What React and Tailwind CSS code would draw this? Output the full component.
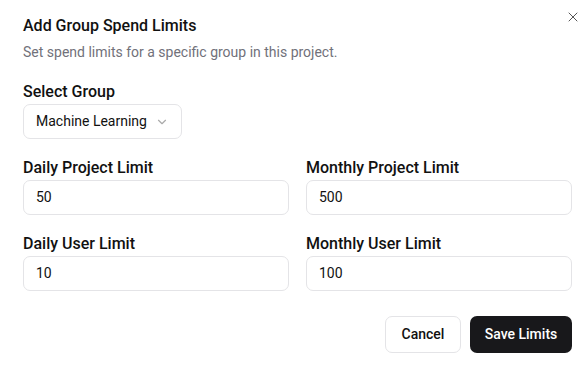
import { ChevronDown, X } from "lucide-react";

function Field({ label, value }) {
  return (
    <div className="flex flex-col">
      <label className="text-[16px] font-medium text-[#111] leading-[20px]">{label}</label>
      <div className="mt-[2px] h-[35px] rounded-[7px] border border-[#e4e4e7] px-[12px] flex items-center text-[14px] text-[#111]">
        {value}
      </div>
    </div>
  );
}

export default function App() {
  return (
    <div
      className="relative w-[588px] h-[367px] bg-white pl-[23px] pr-[16px] pt-[12px] overflow-hidden"
      style={{ fontFamily: 'Roboto, "Noto Sans", sans-serif' }}
    >
      <button className="absolute right-[7px] top-[9px] text-[#555]">
        <X size={16} strokeWidth={1.5} />
      </button>

      <h2 className="text-[16px] font-medium leading-[28px] text-[#111]">Add Group Spend Limits</h2>
      <p className="text-[14px] leading-[20px] text-[#71717a] mt-[2px]">
        Set spend limits for a specific group in this project.
      </p>

      <div className="mt-[18px]">
        <label className="text-[16px] font-medium text-[#111] leading-[20px]">Select Group</label>
        <div className="mt-[0px] w-[159px] h-[35px] rounded-[7px] border border-[#e4e4e7] px-[12px] flex items-center justify-between text-[14px] text-[#111]">
          <span>Machine Learning</span>
          <ChevronDown size={14} className="text-[#aaa]" />
        </div>
      </div>

      <div className="mt-[19px] grid grid-cols-2 gap-x-[17px] gap-y-[19px]">
        <Field label="Daily Project Limit" value="50" />
        <Field label="Monthly Project Limit" value="500" />
        <Field label="Daily User Limit" value="10" />
        <Field label="Monthly User Limit" value="100" />
      </div>

      <div className="mt-[25px] flex justify-end gap-[9px]">
        <button className="h-[37px] w-[76px] rounded-[7px] border border-[#e4e4e7] text-[14px] font-medium text-[#111]">
          Cancel
        </button>
        <button className="h-[37px] w-[102px] rounded-[7px] bg-[#18181b] text-[14px] font-medium text-white">
          Save Limits
        </button>
      </div>
    </div>
  );
}
